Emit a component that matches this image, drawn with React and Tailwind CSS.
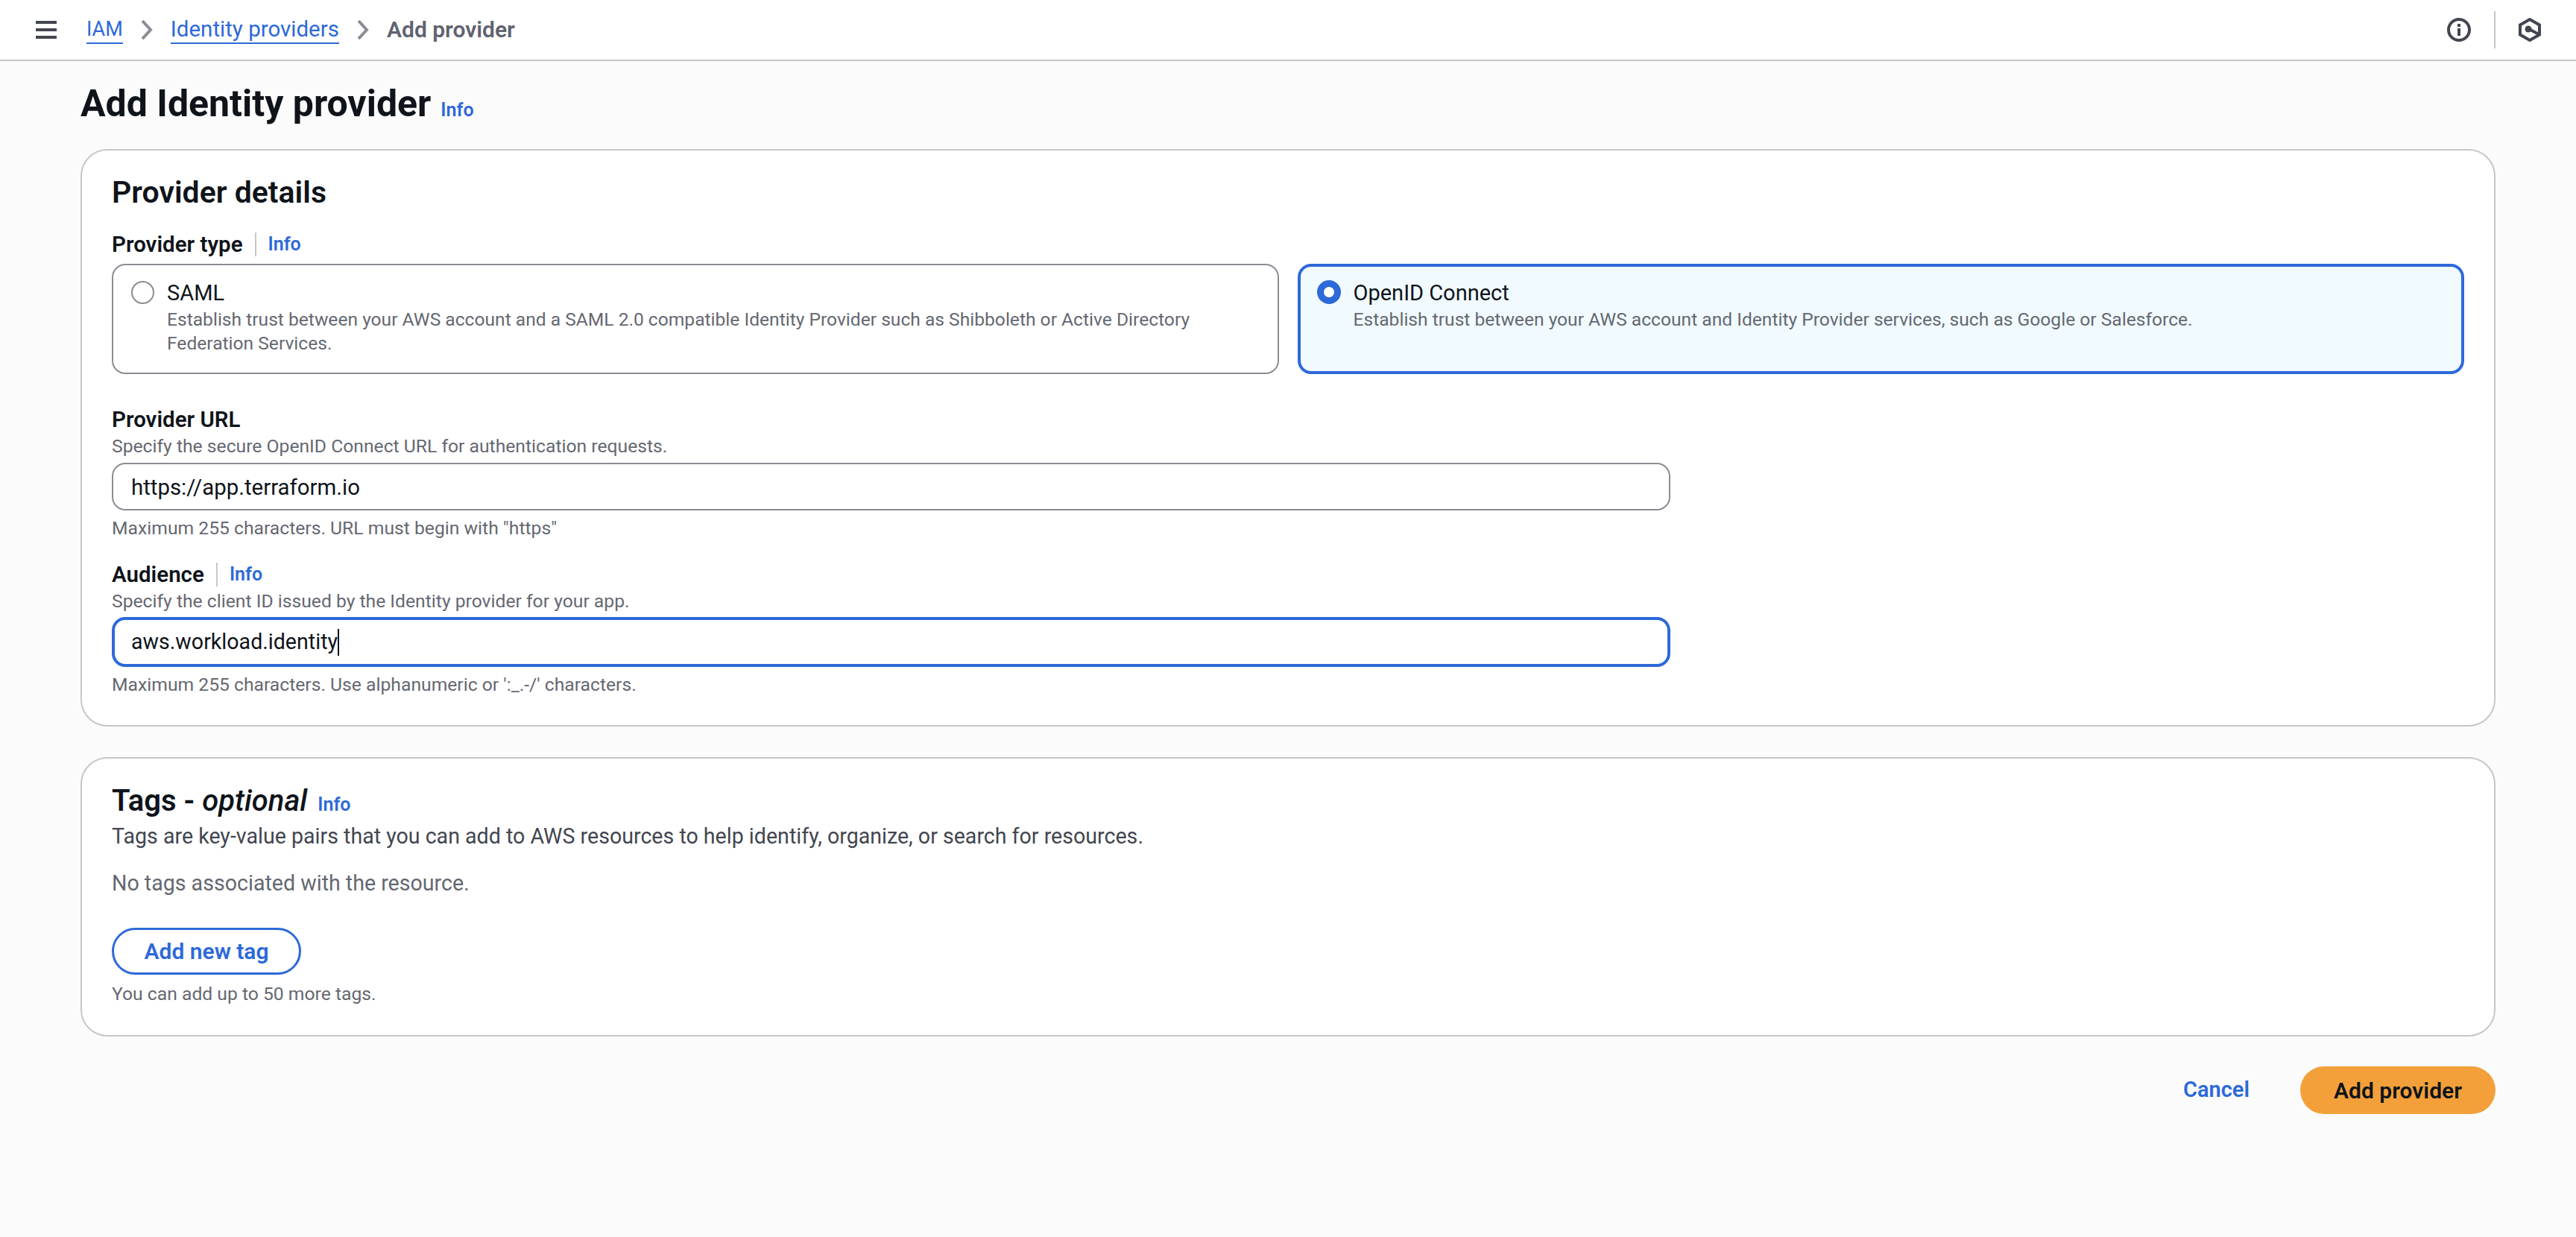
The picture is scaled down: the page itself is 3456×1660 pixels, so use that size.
import React from "react"

const Info = ({ className = "" }) => (
  <a className={`text-[#2d69d9] text-[25px] leading-[32px] font-semibold ${className}`}>Info</a>
)

const Sep = () => <span className="w-[2px] h-[32px] bg-[#c6c6cd] mx-[16px]" />

const Label = ({ children, info }) => (
  <div className="flex items-center h-[32px]">
    <span className="text-[#0f141a] text-[29.5px] leading-[32px] font-semibold">{children}</span>
    {info && <Sep />}
    {info && <Info />}
  </div>
)

const Small = ({ children, className = "" }) => (
  <p className={`text-[#656871] text-[24.7px] leading-[32px] ${className}`}>{children}</p>
)

const RadioCard = ({ title, selected, children }) => (
  <div
    className={
      selected
        ? "flex h-[148px] rounded-[18px] border-[4px] border-[#2d69d9] bg-[#f1faff] pl-[22px] pt-[18px]"
        : "flex h-[148px] rounded-[18px] border-[2px] border-[#8c8c94] bg-white pl-[24px] pt-[20px]"
    }
  >
    {selected ? (
      <span className="w-[32px] h-[32px] shrink-0 rounded-full border-[9px] border-[#2d69d9] bg-white" />
    ) : (
      <span className="mt-[1px] w-[31px] h-[31px] shrink-0 rounded-full border-[2px] border-[#8c8c94] bg-white" />
    )}
    <div className="ml-[17px]">
      <div className="text-[#0f141a] text-[29px] leading-[34px]">{title}</div>
      <p className="text-[#656871] text-[24.6px] leading-[32px] mt-[3px] pr-[60px]">{children}</p>
    </div>
  </div>
)

const App = () => {
  return (
    <div className="min-h-[1660px] bg-[#fbfbfb] font-['Roboto','Liberation_Sans',sans-serif]">
      <header className="h-[82px] bg-white border-b-2 border-[#c6c6cd] flex items-center pl-[48px] pr-[47px]">
        <svg width="28" height="24" viewBox="0 0 28 24" fill="#424650">
          <rect x="0" y="0" width="28" height="4" />
          <rect x="0" y="10" width="28" height="4" />
          <rect x="0" y="20" width="28" height="4" />
        </svg>
        <a className="ml-[40px] text-[#2d69d9] text-[27px] leading-[36px] border-b-2 border-[#2d69d9]">IAM</a>
        <svg className="mx-[24px]" width="16" height="26" viewBox="0 0 16 26" fill="none" stroke="#8c8c94" strokeWidth="4">
          <path d="M2 1l11 12L2 25" />
        </svg>
        <a className="text-[#2d69d9] text-[29.5px] leading-[36px] border-b-2 border-[#2d69d9]">Identity providers</a>
        <svg className="mx-[24px]" width="16" height="26" viewBox="0 0 16 26" fill="none" stroke="#8c8c94" strokeWidth="4">
          <path d="M2 1l11 12L2 25" />
        </svg>
        <span className="text-[#5f6370] text-[30px] leading-[36px] font-semibold">Add provider</span>
        <div className="ml-auto flex items-center">
          <svg width="32" height="32" viewBox="0 0 32 32" fill="none">
            <circle cx="16" cy="16" r="14" stroke="#424650" strokeWidth="4" />
            <rect x="14" y="14" width="4" height="10" fill="#424650" />
            <rect x="14" y="8" width="4" height="4" fill="#424650" />
          </svg>
          <span className="w-[2px] h-[50px] bg-[#c6c6cd] mx-[31px]" />
          <svg width="30" height="32" viewBox="0 0 30 32" fill="none">
            <path d="M15 2l13 7.5v13L15 30 2 22.5v-13z" stroke="#424650" strokeWidth="4" />
            <circle cx="13" cy="15" r="4.5" fill="#424650" />
            <path d="M14 15l13 7" stroke="#424650" strokeWidth="4" />
          </svg>
        </div>
      </header>

      <main className="px-[108px] pt-[26px]">
        <div className="flex items-baseline h-[64px]">
          <h1 className="text-[#0f141a] text-[50px] leading-[62px] font-bold">Add Identity provider</h1>
          <Info className="ml-[13px]" />
        </div>

        <section className="mt-[28px] h-[775px] rounded-[36px] border-2 border-[#c6c6cd] bg-white px-[40px] pt-[32px]">
          <h2 className="text-[#0f141a] text-[41px] leading-[48px] font-semibold">Provider details</h2>
          <div className="mt-[30px]">
            <Label info>Provider type</Label>
          </div>
          <div className="mt-[10px] grid grid-cols-2 gap-[25px]">
            <RadioCard title="SAML">
              Establish trust between your AWS account and a SAML 2.0 compatible Identity Provider such as Shibboleth or Active Directory Federation Services.
            </RadioCard>
            <RadioCard title="OpenID Connect" selected>
              Establish trust between your AWS account and Identity Provider services, such as Google or Salesforce.
            </RadioCard>
          </div>

          <div className="mt-[45px]">
            <Label>Provider URL</Label>
          </div>
          <Small className="mt-[4px]">Specify the secure OpenID Connect URL for authentication requests.</Small>
          <div className="mt-[6px] w-[2091px] h-[64px] rounded-[18px] border-2 border-[#8c8c94] bg-white flex items-center pl-[24px] text-[#0f141a] text-[29.4px]">
            <span className="relative top-[1px]">https://app.terraform.io</span>
          </div>
          <Small className="mt-[8px]">Maximum 255 characters. URL must begin with "https"</Small>

          <div className="mt-[30px]">
            <Label info>Audience</Label>
          </div>
          <Small className="mt-[4px]">Specify the client ID issued by the Identity provider for your app.</Small>
          <div className="mt-[5px] w-[2091px] h-[67px] rounded-[18px] border-[4px] border-[#2d69d9] bg-white flex items-center pl-[22px] text-[#0f141a] text-[28.6px]">
            aws.workload.identity
            <span className="w-[2px] h-[36px] bg-[#0f141a]" />
          </div>
          <Small className="mt-[8px]">Maximum 255 characters. Use alphanumeric or ':_.-/' characters.</Small>
        </section>

        <section className="mt-[41px] h-[375px] rounded-[36px] border-2 border-[#c6c6cd] bg-white px-[40px] pt-[33px]">
          <div className="flex items-baseline">
            <h2 className="text-[#0f141a] text-[40px] leading-[48px] font-semibold">
              Tags - <span className="italic font-medium">optional</span>
            </h2>
            <Info className="ml-[14px]" />
          </div>
          <p className="mt-[3px] text-[#424650] text-[28.6px] leading-[40px]">
            Tags are key-value pairs that you can add to AWS resources to help identify, organize, or search for resources.
          </p>
          <p className="mt-[23px] text-[#656871] text-[28.6px] leading-[40px]">No tags associated with the resource.</p>
          <button className="mt-[40px] block w-[254px] h-[63px] rounded-full border-[3px] border-[#2d69d9] text-[#2d69d9] text-[30px] font-semibold">
            Add new tag
          </button>
          <Small className="mt-[10px]">You can add up to 50 more tags.</Small>
        </section>

        <div className="mt-[40px] flex items-center justify-end">
          <a className="text-[#2d69d9] text-[29px] font-semibold">Cancel</a>
          <button className="ml-[68px] w-[262px] h-[64px] rounded-full bg-[#f3a03a] text-[#0f141a] text-[30px] font-semibold">
            Add provider
          </button>
        </div>
      </main>
    </div>
  )
}

export default App
